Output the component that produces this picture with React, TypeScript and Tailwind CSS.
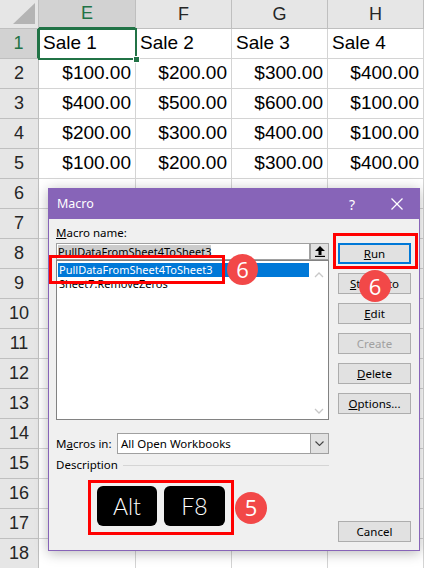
import React from "react";

const cols = ["E", "F", "G", "H"];
const data: string[][] = [
  ["Sale 1", "Sale 2", "Sale 3", "Sale 4"],
  ["$100.00", "$200.00", "$300.00", "$400.00"],
  ["$400.00", "$500.00", "$600.00", "$100.00"],
  ["$200.00", "$300.00", "$400.00", "$100.00"],
  ["$100.00", "$200.00", "$300.00", "$400.00"],
];
const rows = Array.from({ length: 18 }, (_, i) => i + 1);

function Chevron({ up }: { up?: boolean }) {
  return (
    <svg width="10" height="6" viewBox="0 0 10 6">
      <polyline points={up ? "1,5 5,1 9,5" : "1,1 5,5 9,1"} fill="none" stroke="#c8c8c8" strokeWidth="1.3" />
    </svg>
  );
}

function Btn({ children, disabled, primary }: { children: React.ReactNode; disabled?: boolean; primary?: boolean }) {
  return (
    <div
      className={
        "h-[21px] w-[73px] flex items-center justify-center bg-[#e1e1e1] " +
        (primary ? "border-2 border-[#0078d7] " : "border border-[#adadad] ") +
        (disabled ? "text-[#a0a0a0]" : "text-black")
      }
    >
      {children}
    </div>
  );
}

export default function App() {
  return (
    <div className="relative w-[424px] h-[568px] overflow-hidden bg-white font-['Liberation_Sans',Arial,sans-serif]">
      {/* Spreadsheet grid */}
      <div className="grid grid-cols-[39px_97px_96px_96px_96px] grid-rows-[29px_repeat(18,30px)]">
        <div className="bg-[#e6e6e6] border-r border-b border-[#bfbfbf] flex items-end justify-end pr-[3px] pb-[4px]">
          <svg width="22" height="21" viewBox="0 0 22 21">
            <polygon points="0,21 22,21 22,0" fill="#b4b4b4" />
          </svg>
        </div>
        {cols.map((c, i) => (
          <div
            key={c}
            className={
              "flex items-center justify-center text-[18px] border-r border-b border-[#bfbfbf] " +
              (i === 0 ? "bg-[#d2d2d2] text-[#217346] border-b-[#217346] border-b-2" : "bg-[#e6e6e6] text-[#262626]")
            }
          >
            {c}
          </div>
        ))}
        {rows.map((r) => (
          <React.Fragment key={r}>
            <div
              className={
                "flex items-center justify-center text-[18px] border-r border-b border-[#bfbfbf] " +
                (r === 1 ? "bg-[#d2d2d2] text-[#217346] border-r-2 border-r-[#217346]" : "bg-[#e6e6e6] text-[#262626]")
              }
            >
              {r}
            </div>
            {cols.map((c, ci) => {
              const v = data[r - 1]?.[ci] ?? "";
              return (
                <div
                  key={c}
                  className={
                    "flex items-center text-[19px] text-black border-r border-b border-[#d4d4d4] px-[4px] " +
                    (r === 1 ? "justify-start" : "justify-end")
                  }
                >
                  {v}
                </div>
              );
            })}
          </React.Fragment>
        ))}
      </div>

      {/* Active cell */}
      <div className="absolute left-[38px] top-[28px] w-[99px] h-[32px] border-2 border-[#217346]">
        <div className="absolute right-[-5px] bottom-[-5px] w-[7px] h-[7px] bg-[#217346] border border-white" />
      </div>

      {/* Macro dialog */}
      <div className="absolute left-[48px] top-[188px] w-[372px] h-[363px] flex flex-col border border-[#8764b8] bg-[#f0f0f0] shadow-[0_2px_12px_rgba(0,0,0,0.28)] font-['Noto_Sans',sans-serif] text-[11px] text-black">
        <div className="h-[30px] bg-[#8764b8] flex items-center pl-[8px] text-white text-[12.5px]">
          <span>Macro</span>
          <span className="ml-auto mr-[36px] text-[14px]">?</span>
          <svg width="12" height="12" viewBox="0 0 12 12" className="mr-[16px]">
            <line x1="0.5" y1="0.5" x2="11.5" y2="11.5" stroke="white" strokeWidth="1.2" />
            <line x1="11.5" y1="0.5" x2="0.5" y2="11.5" stroke="white" strokeWidth="1.2" />
          </svg>
        </div>
        <div className="flex flex-1 pl-[7px] pr-[8px]">
          {/* Left column */}
          <div className="w-[273px] flex flex-col">
            <div className="mt-[6px] h-[16px] leading-[16px] text-[11.5px]">
              <span className="underline">M</span>acro name:
            </div>
            <div className="mt-[2px] h-[17px] flex">
              <div className="flex-1 border border-[#a0a0a0] bg-white flex items-center pl-[1px]">
                <span className="bg-[#cccccc] leading-[13px] text-black">PullDataFromSheet4ToSheet3</span>
              </div>
              <div className="w-[19px] border border-[#a0a0a0] bg-[#e1e1e1] flex items-center justify-center">
                <svg width="10" height="11" viewBox="0 0 10 11">
                  <polygon points="5,0 10,5 6.5,5 6.5,9 3.5,9 3.5,5 0,5" fill="black" />
                  <rect x="0" y="9.8" width="10" height="1.2" fill="black" />
                </svg>
              </div>
            </div>
            <div className="h-[160px] border border-[#828282] bg-white flex">
              <div className="flex-1 pt-[2px] pl-[1px]">
                <div className="h-[14px] leading-[14px] bg-[#0078d7] text-white pl-[1px]">PullDataFromSheet4ToSheet3</div>
                <div className="h-[14px] leading-[14px] pl-[1px]">Sheet7.RemoveZeros</div>
              </div>
              <div className="w-[19px] flex flex-col items-center justify-between pt-[11px] pb-[5px]">
                <Chevron up />
                <Chevron />
              </div>
            </div>
            <div className="mt-[13px] h-[21px] flex items-center text-[11.5px]">
              <div className="w-[61px]">
                M<span className="underline">a</span>cros in:
              </div>
              <div className="flex-1 h-full border border-[#a0a0a0] bg-white flex">
                <div className="flex-1 flex items-center pl-[3px]">All Open Workbooks</div>
                <div className="w-[18px] bg-[#e1e1e1] border-l border-[#a0a0a0] flex items-center justify-center">
                  <svg width="9" height="5" viewBox="0 0 9 5">
                    <polyline points="0.5,0.5 4.5,4.5 8.5,0.5" fill="none" stroke="#444" strokeWidth="1.1" />
                  </svg>
                </div>
              </div>
            </div>
            <div className="mt-[4px] h-[14px] flex items-center text-[11.5px]">
              <span className="leading-[14px]">Description</span>
              <div className="flex-1 ml-[5px] h-px bg-[#d5d5d5]" />
            </div>
            <div className="mt-[8px] flex items-center">
              <div className="ml-[32px] w-[146px] h-[55px] border-[3px] border-[#ff0000] flex items-start pt-[3px] pl-[6px] gap-[7px]">
                <div className="w-[60px] h-[40px] rounded-[6px] bg-black text-white flex items-center justify-center text-[23px] font-light font-['Lato',sans-serif]">
                  Alt
                </div>
                <div className="w-[61px] h-[40px] rounded-[6px] bg-black text-white flex items-center justify-center text-[23px] font-light font-['Lato',sans-serif]">
                  F8
                </div>
              </div>
              <div className="ml-[1px] w-[32px] h-[32px] rounded-full bg-[#f24848] text-white flex items-center justify-center text-[22px] font-['Open_Sans',sans-serif]">
                5
              </div>
            </div>
          </div>
          {/* Right column */}
          <div className="ml-[9px] w-[73px] flex flex-col pt-[24px] gap-[9px] text-[11.5px]">
            <Btn primary>
              <span className="underline">R</span>un
            </Btn>
            <Btn>
              <span className="underline">S</span>tep Into
            </Btn>
            <Btn>
              <span className="underline">E</span>dit
            </Btn>
            <Btn disabled>Create</Btn>
            <Btn>
              <span className="underline">D</span>elete
            </Btn>
            <Btn>
              <span className="underline">O</span>ptions...
            </Btn>
            <div className="mt-auto mb-[8px]">
              <Btn>Cancel</Btn>
            </div>
          </div>
        </div>

        {/* Highlights */}
        <div className="absolute left-[0px] top-[66px] w-[176px] h-[29px] border-[3px] border-[#ff0000]" />
        <div className="absolute left-[178px] top-[65px] w-[31px] h-[31px] rounded-full bg-[#f24848] text-white flex items-center justify-center text-[22px] font-['Open_Sans',sans-serif]">
          6
        </div>
        <div className="absolute left-[284px] top-[44px] w-[85px] h-[36px] border-[3px] border-[#ff0000]" />
        <div className="absolute left-[310px] top-[81px] w-[32px] h-[32px] rounded-full bg-[#f24848] text-white flex items-center justify-center text-[22px] font-['Open_Sans',sans-serif]">
          6
        </div>
      </div>
    </div>
  );
}
